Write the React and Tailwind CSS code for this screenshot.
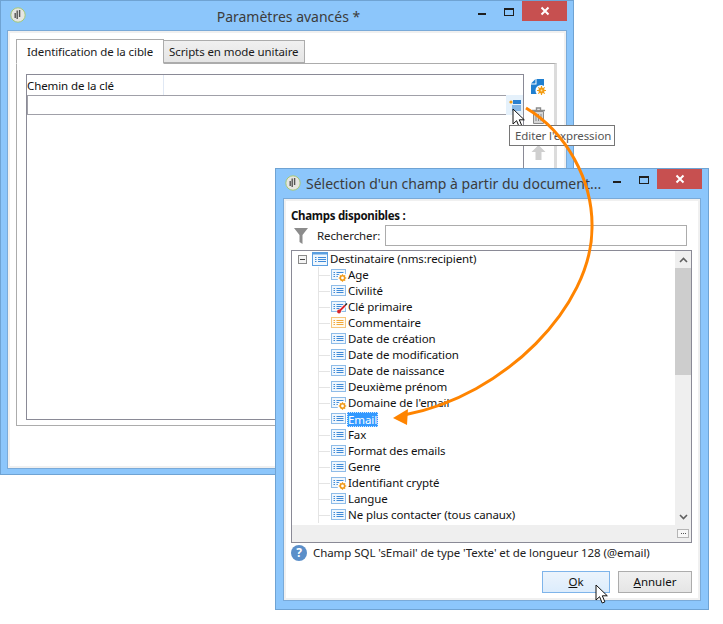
const FONT = "font-['Noto_Sans',sans-serif]";

function Logo() {
  return (
    <svg width="16" height="16" viewBox="0 0 16 16" className="shrink-0">
      <circle cx="8" cy="8" r="7.2" fill="#e6e6e2" stroke="#a5c878" strokeWidth="1" />
      <path d="M7.2 3.5v8.5M9.6 3v7M5.2 6v5" stroke="#555" strokeWidth="1.4" fill="none" />
    </svg>
  );
}

function WinButtons() {
  return (
    <div className="ml-auto flex items-start">
      <div className="w-[8px] h-[2px] bg-[#1f1f1f] mt-[12px] mr-[18px]" />
      <div className="w-[10px] h-[8px] border border-[#1f1f1f] border-t-2 mt-[7px] mr-[8px]" />
      <div className="w-[45px] h-[20px] bg-[#c75050] flex items-center justify-center">
        <svg width="10" height="10" viewBox="0 0 10 10">
          <path d="M1.5 1.5l7 7M8.5 1.5l-7 7" stroke="#fff" strokeWidth="2" />
        </svg>
      </div>
    </div>
  );
}

function TreeIcon({ kind }) {
  const c = kind === "orange" ? "#f2a93b" : "#3f8ad8";
  const border = kind === "orange" ? "#f6c67e" : "#8fbce8";
  const fill = kind === "orange" ? "#fffaf0" : "#f0f7fd";
  return (
    <svg width="17" height="14" viewBox="0 0 17 14" className="shrink-0 overflow-visible">
      <g transform="translate(0,1)">
        <rect x="0.5" y="0.5" width="14" height="10" fill={fill} stroke={border} />
        <path d="M2.5 3.5h1.5M2.5 5.5h1.5M2.5 7.5h1.5M5.5 3.5h7M5.5 5.5h7M5.5 7.5h7" stroke={c} strokeWidth="1" />
      </g>
      {kind === "gear" && (
        <g>
          <circle cx="11.5" cy="10" r="5" fill="#fff" />
          <circle cx="11.5" cy="10" r="2.2" fill="#fff" stroke="#ef9a1a" strokeWidth="1.6" />
          <path d="M11.5 6.2v1.400M11.5 12.400v1.400M7.700 10h1.400M13.900 10h1.400M8.900 7.400l1 1M13.100 11.600l1 1M14.100 7.400l-1 1M9.900 12.600l1-1" stroke="#ef9a1a" strokeWidth="1.200" />
        </g>
      )}
      {kind === "key" && (
        <g>
          <path d="M7 12.500l8-8" stroke="#fff" strokeWidth="3.500" />
          <path d="M8 11.500l6-6" stroke="#d8232a" strokeWidth="1.800" />
          <circle cx="8" cy="11.500" r="1.900" fill="#d8232a" />
          <path d="M16 3.500l-2 2" stroke="#222" strokeWidth="1.500" />
        </g>
      )}
    </svg>
  );
}

const rows = [
  ["Age", "gear"],
  ["Civilité", "list"],
  ["Clé primaire", "key"],
  ["Commentaire", "orange"],
  ["Date de création", "list"],
  ["Date de modification", "list"],
  ["Date de naissance", "list"],
  ["Deuxième prénom", "list"],
  ["Domaine de l'email", "gear"],
  ["Email", "list", true],
  ["Fax", "list"],
  ["Format des emails", "list"],
  ["Genre", "list"],
  ["Identifiant crypté", "gear"],
  ["Langue", "list"],
  ["Ne plus contacter (tous canaux)", "list"],
];

function Cursor({ className }) {
  return (
    <svg width="14" height="21" viewBox="0 0 14 21" className={className}>
      <path d="M1 1v15l3.600-3.300 2.600 6.300 2.700-1.100-2.600-6.100h5L1 1z" fill="#fff" stroke="#111" strokeWidth="1" strokeLinejoin="round" />
    </svg>
  );
}

function FirstWindow() {
  return (
    <div className="absolute left-0 top-0 w-[574px] h-[475px] bg-[#8cc6fb] border border-[#6fa3d3] flex flex-col">
      <div className="h-[29px] flex items-start pl-[9px] pr-[6px] relative shrink-0">
        <div className="mt-[6px]"><Logo /></div>
        <div className="absolute left-0 right-0 top-[6px] text-center text-[#3c3c3c] text-[14px] leading-[20px] pl-[3px]">Paramètres avancés *</div>
        <WinButtons />
      </div>
      <div className="flex-1 mx-[6px] mb-[5px] bg-white border border-[#7aaad8] pt-[8px] pl-[8px] pr-[9px] pb-[42px] flex flex-col shadow-[inset_0_0_0_2px_#f0f0f0]">
        <div className="flex items-end h-[24px] shrink-0 relative z-10">
          <div className="w-[148px] h-[25px] -mb-px bg-white border border-[#acacac] border-b-white pl-[10px] text-[11.5px] tracking-[-0.1px] leading-[23px] text-[#1a1a1a] whitespace-nowrap">Identification de la cible</div>
          <div className="w-[141px] h-[23px] bg-gradient-to-b from-[#f0f0f0] to-[#e5e5e5] border border-l-0 border-[#acacac] pl-[5px] text-[11.5px] tracking-[-0.1px] leading-[21px] text-[#1a1a1a] whitespace-nowrap">Scripts en mode unitaire</div>
        </div>
        <div className="flex-1 border border-[#acacac] border-r-[3px] border-r-[#dcdcdc] pt-[10px] pl-[9px] pb-[5px] flex">
          <div className="w-[498px] border border-[#8a8a96] flex flex-col">
            <div className="h-[21px] shrink-0 flex border-b border-[#a0a0a8]">
              <div className="w-[137px] border-r border-[#e0e8f4] text-[11.5px] tracking-[-0.1px] leading-[21px] text-[#111]">Chemin de la clé</div>
            </div>
            <div className="h-[19px] shrink-0 border-b border-l border-[#a0a0a8] w-[481px]" />
            <div className="flex-1" />
          </div>
          <div className="flex flex-col pl-[7px] pt-[5px] items-start">
            <svg width="15" height="17" viewBox="0 0 15 17">
              <path d="M5.500 0H13V15H0V5.500H5.500z" fill="#1f7fd0" />
              <path d="M0 4.500L4.500 0V4.500z" fill="#1f7fd0" />
              <circle cx="10" cy="11.500" r="5.500" fill="#fff" />
              <circle cx="10.500" cy="11.500" r="3" fill="#f39c12" />
              <path d="M10.500 7v9M6 11.500h9M7.300 8.300l6.400 6.400M13.700 8.300l-6.400 6.400" stroke="#f39c12" strokeWidth="1.200" />
              <circle cx="10.500" cy="11.500" r="0.900" fill="#ffe2a8" />
            </svg>
            <svg width="15" height="17" viewBox="0 0 15 17" className="mt-[11px]">
              <path d="M1 3.500h13M5.500 3V1h4v2" stroke="#8a8a8a" strokeWidth="1.400" fill="none" />
              <path d="M2.500 4.500h10v12h-10z" fill="#d6d6d6" stroke="#8a8a8a" />
              <path d="M5 7v7M7.500 7v7M10 7v7" stroke="#8a8a8a" />
            </svg>
            <svg width="15" height="15" viewBox="0 0 15 15" className="mt-[21px]">
              <path d="M7.500 0l7 7h-4v8h-6V7h-4z" fill="#cfcfcf" />
            </svg>
          </div>
        </div>
      </div>
    </div>
  );
}

function SecondWindow() {
  return (
    <div className="absolute left-[275px] top-[168px] w-[434px] h-[442px] bg-[#8cc6fb] border border-[#6fa3d3] flex flex-col">
      <div className="h-[29px] flex items-start pl-[9px] pr-[6px] shrink-0">
        <div className="mt-[6px]"><Logo /></div>
        <div className="ml-[5px] mt-[5px] text-[#3c3c3c] text-[14px] leading-[20px] whitespace-nowrap">Sélection d'un champ à partir du document...</div>
        <WinButtons />
      </div>
      <div className="flex-1 mx-[7px] mb-[8px] bg-white border border-[#7aaad8] pl-[7px] pr-[8px] pt-[8px] flex flex-col shadow-[inset_0_0_0_2px_#f0f0f0]">
        <div className="text-[11.5px] leading-[17px] font-bold text-[#111] tracking-[-0.3px]">Champs disponibles :</div>
        <div className="flex items-center h-[21px] mt-px pl-[3px] mr-[5px]">
          <svg width="14" height="16" viewBox="0 0 14 16" className="shrink-0">
            <path d="M0 0h14L8.500 7v9l-3-2V7z" fill="#8c8c8c" />
          </svg>
          <span className="ml-[9px] text-[11.5px] tracking-[-0.1px] text-[#222] whitespace-nowrap">Rechercher:</span>
          <div className="ml-auto w-[302px] h-[21px] bg-white border border-[#acacac]" />
        </div>
        <div className="h-[293px] mt-[4px] border border-[#8a8a96] flex flex-col shrink-0">
          <div className="flex-1 flex min-h-0">
            <div className="flex-1 relative pl-[6px] overflow-hidden">
              <div className="flex items-center h-[16px]">
                <div className="w-[9px] h-[9px] border border-[#8a8a8a] bg-[#f4f4f4] flex items-center justify-center shrink-0">
                  <div className="w-[5px] h-px bg-[#444]" />
                </div>
                <svg width="16" height="14" viewBox="0 0 16 14" className="ml-[5px] shrink-0">
                  <rect x="0.500" y="0.500" width="15" height="13" fill="#f0f7fd" stroke="#5a9ee0" />
                  <path d="M1 1.500h14" stroke="#5a9ee0" strokeWidth="2" />
                  <path d="M3 5.500h1.500M3 7.500h1.500M3 9.500h1.500M6 5.500h8M6 7.500h8M6 9.500h8" stroke="#3f8ad8" />
                </svg>
                <span className="ml-[2px] text-[11.5px] tracking-[-0.1px] leading-[16px] text-[#111] whitespace-nowrap">Destinataire (nms:recipient)</span>
              </div>
              <div className="ml-[20px] border-l border-[#e4e4e4] pl-[12px]">
                {rows.map(([label, kind, sel]) => (
                  <div key={label} className="flex items-center h-[16px] relative">
                    <div className="absolute left-[-12px] w-[11px] h-px bg-[#e4e4e4]" />
                    <TreeIcon kind={kind} />
                    <span className={sel
                      ? "text-[11.5px] tracking-[-0.1px] leading-[15px] whitespace-nowrap bg-[#3399ff] text-white outline-1 outline-dotted outline-[#cfe6ff] -outline-offset-1 px-px -ml-px"
                      : "text-[11.5px] tracking-[-0.1px] leading-[16px] text-[#111] whitespace-nowrap"}>{label}</span>
                  </div>
                ))}
              </div>
            </div>
            <div className="w-[16px] bg-[#efefef] flex flex-col shrink-0">
              <div className="h-[17px] flex items-center justify-center shrink-0">
                <svg width="9" height="6" viewBox="0 0 9 6"><path d="M1 5l3.500-3.500L8 5" stroke="#606060" strokeWidth="1.600" fill="none" /></svg>
              </div>
              <div className="h-[107px] bg-[#cdcdcd] shrink-0" />
              <div className="flex-1" />
              <div className="h-[17px] flex items-center justify-center shrink-0">
                <svg width="9" height="6" viewBox="0 0 9 6"><path d="M1 1l3.500 3.500L8 1" stroke="#606060" strokeWidth="1.600" fill="none" /></svg>
              </div>
            </div>
          </div>
          <div className="h-[17px] shrink-0 bg-[#efefef] flex justify-end items-center pr-[2px]">
            <div className="w-[12px] h-[9px] border border-[#b5b5b5] bg-[#f7f7f7] flex items-center justify-center gap-px">
              <div className="w-px h-px bg-[#555]" />
              <div className="w-px h-px bg-[#555]" />
              <div className="w-px h-px bg-[#555]" />
            </div>
          </div>
        </div>
        <div className="flex items-center h-[20px]">
          <div className="w-[16px] h-[16px] rounded-full bg-[#5b8fc9] text-white text-[12px] leading-[16px] font-bold text-center">?</div>
          <span className="ml-[6px] text-[11.5px] tracking-[-0.07px] text-[#222] whitespace-nowrap">Champ SQL 'sEmail' de type 'Texte' et de longueur 128 (@email)</span>
        </div>
        <div className="flex justify-end gap-[8px] mt-[8px]">
          <div className="w-[68px] h-[22px] border border-[#7eb4ea] bg-gradient-to-b from-[#ecf4fc] to-[#dcecfc] text-center text-[11.5px] leading-[20px] text-[#111]"><span className="underline">O</span>k</div>
          <div className="w-[74px] h-[22px] border border-[#acacac] bg-gradient-to-b from-[#f0f0f0] to-[#e5e5e5] text-center text-[11.5px] leading-[20px] text-[#111]"><span className="underline">A</span>nnuler</div>
        </div>
      </div>
    </div>
  );
}

export default function App() {
  return (
    <div className={`relative w-[723px] h-[624px] bg-white overflow-hidden ${FONT}`}>
      <FirstWindow />
      <div className="absolute left-[506px] top-[95px] w-[17px] h-[20px] bg-[#e5f1fb] flex justify-center pt-[4px]">
        <svg width="12" height="12" viewBox="0 0 12 12">
          <circle cx="2" cy="3" r="1.600" fill="#f39c12" />
          <path d="M4 1h8v4H4z" fill="#2a80d0" />
          <path d="M3 7h9M3 9h9M3 11h9" stroke="#2a80d0" />
        </svg>
      </div>
      <Cursor className="absolute left-[512px] top-[108px]" />
      <div className="absolute left-[509px] top-[125px] w-[106px] h-[21px] bg-white border border-[#767676] text-[11.5px] tracking-[-0.1px] leading-[19px] text-[#555] pl-[5px] whitespace-nowrap">Editer l'expression</div>
      <SecondWindow />
      <svg width="723" height="624" viewBox="0 0 723 624" className="absolute left-0 top-0 pointer-events-none">
        <path d="M526 108C566 132 593 180 592 228C592 306 505 396 404 415" stroke="#ff8400" strokeWidth="3" fill="none" />
        <path d="M393 418l15-9-1 16z" fill="#ff8400" />
      </svg>
      <Cursor className="absolute left-[595px] top-[584px]" />
    </div>
  );
}
